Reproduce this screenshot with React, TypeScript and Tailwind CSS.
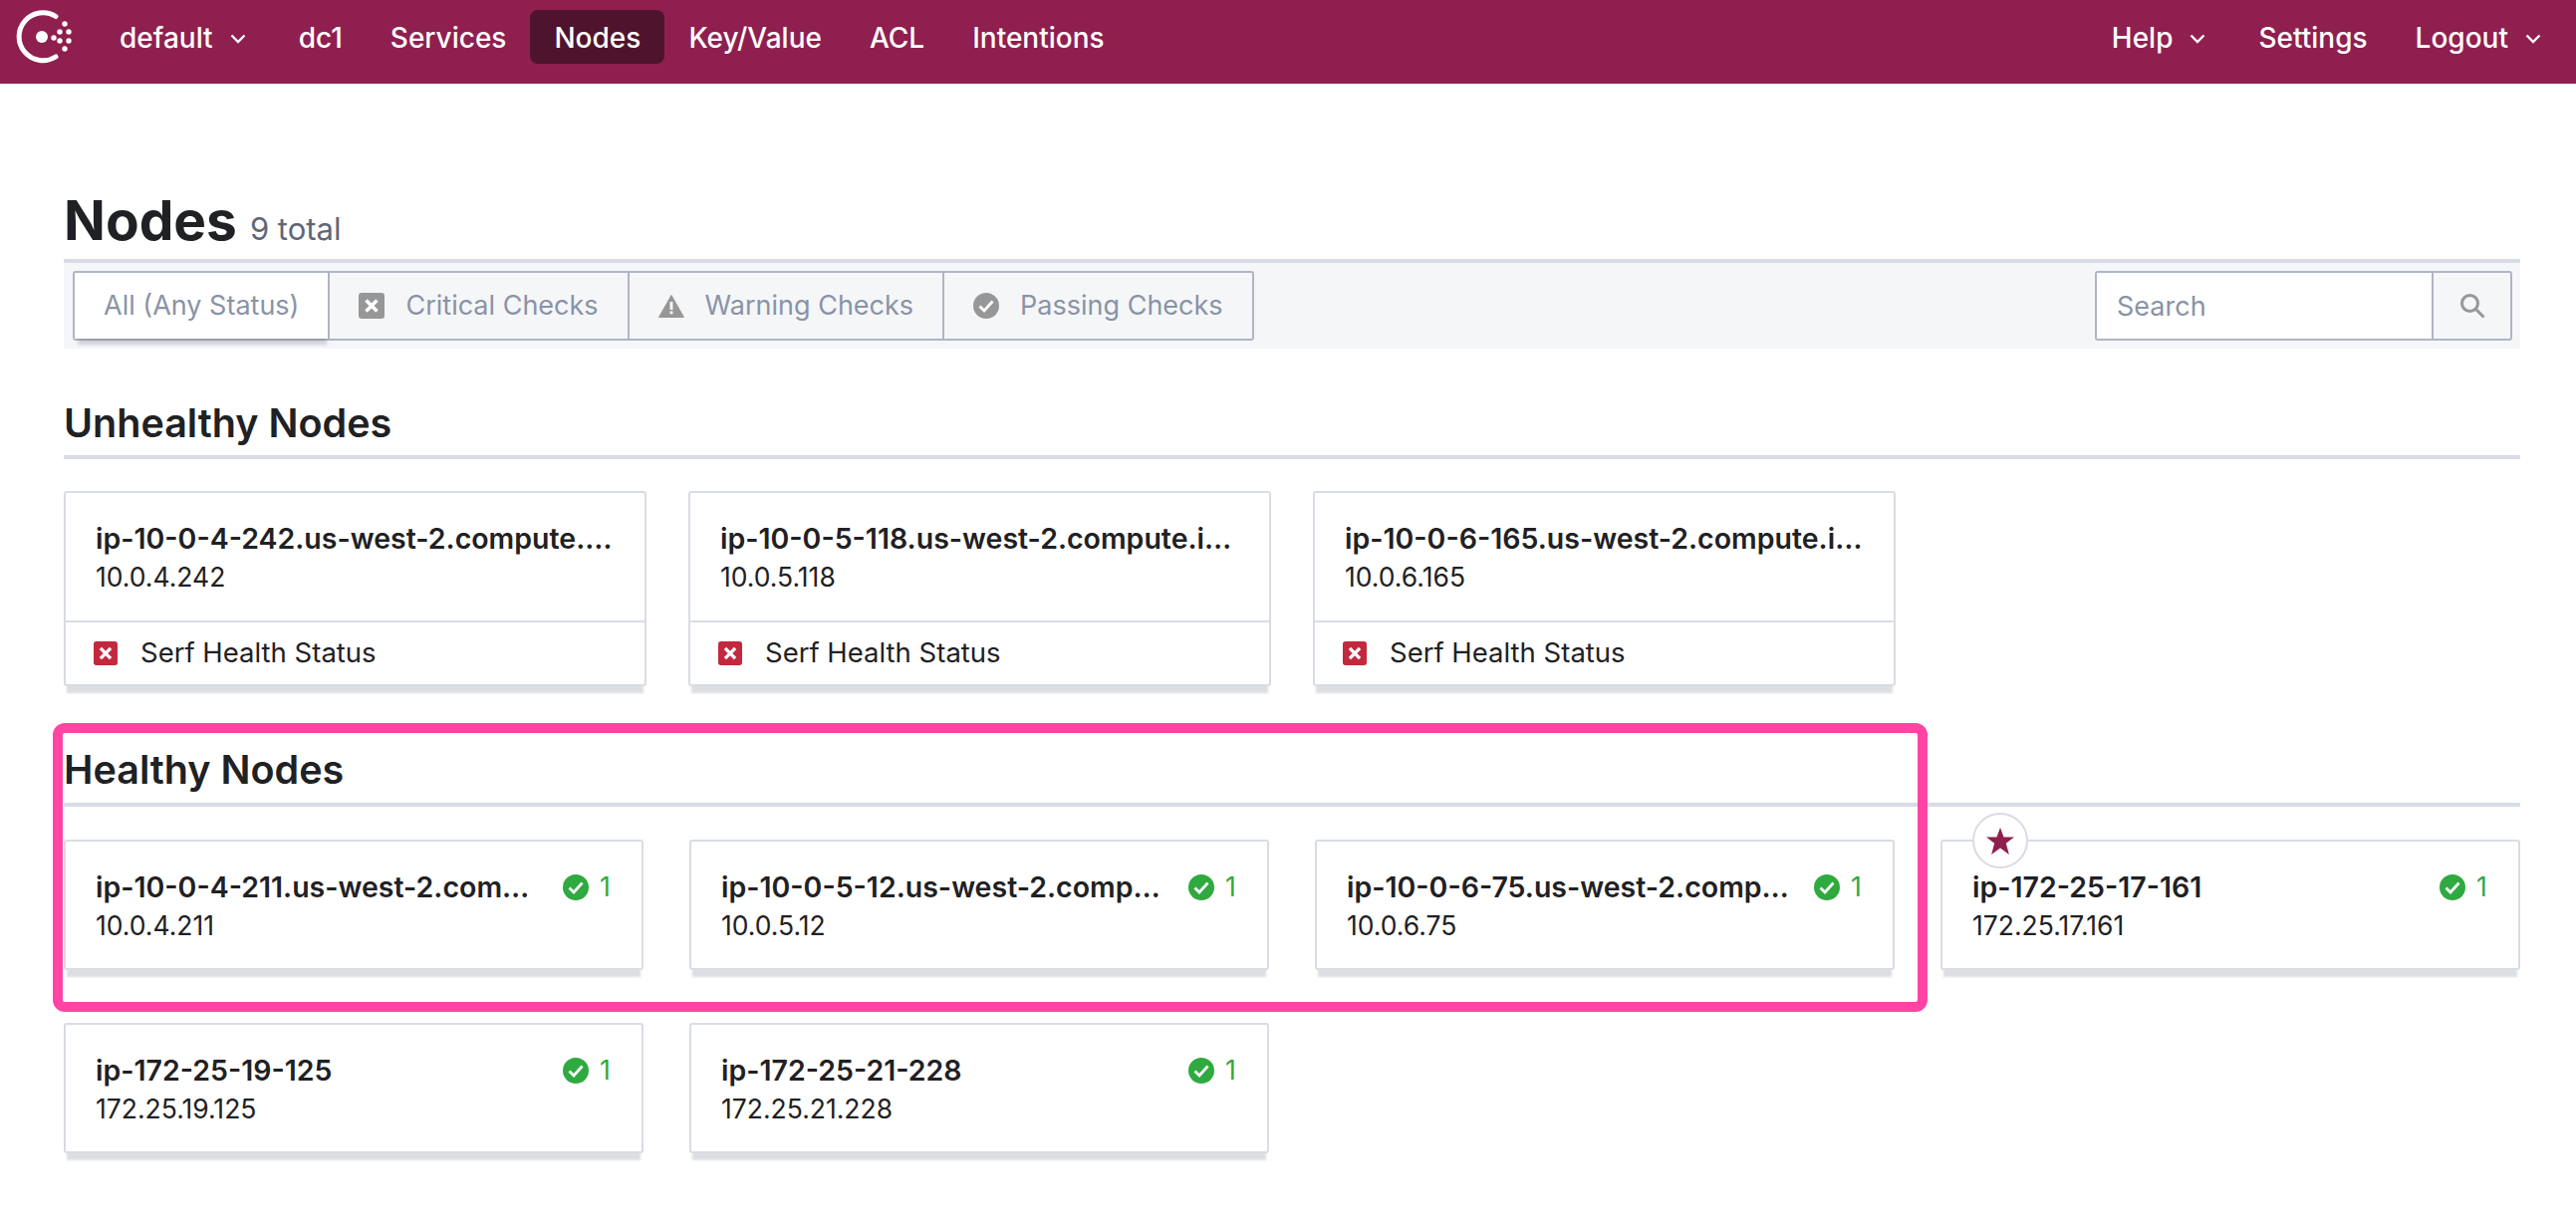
import React from "react";

const font = { fontFamily: "Inter, sans-serif" };

function Chevron() {
  return (
    <svg width="16" height="10" viewBox="0 0 16 10" fill="none" className="ml-[17px] mr-[5px] mt-[2px]">
      <path d="M1.5 1.5 8 8l6.5-6.5" stroke="#fff" strokeWidth="2.4" />
    </svg>
  );
}

function Logo() {
  return (
    <svg width="56" height="54" viewBox="0 0 56 54" fill="none" className="shrink-0">
      <path d="M40 6.500A24 24 0 1 0 40 47" stroke="#fff" strokeWidth="5" strokeLinecap="round" />
      <circle cx="26" cy="27" r="6" fill="#fff" />
      <circle cx="38" cy="28" r="2.700" fill="#fff" />
      <circle cx="49" cy="14" r="2.700" fill="#fff" />
      <circle cx="44" cy="22" r="2.700" fill="#fff" />
      <circle cx="53" cy="22" r="2.700" fill="#fff" />
      <circle cx="44" cy="31" r="2.700" fill="#fff" />
      <circle cx="53" cy="31" r="2.700" fill="#fff" />
      <circle cx="49" cy="39" r="2.700" fill="#fff" />
    </svg>
  );
}

function NavItem({ label, active, chevron }: { label: string; active?: boolean; chevron?: boolean }) {
  return (
    <div className={`flex items-center h-[54px] px-[24px] pt-[2px] rounded-[8px] text-[28px] font-medium text-white ${active ? "bg-[#4e142d]" : ""}`}>
      <span>{label}</span>
      {chevron && <Chevron />}
    </div>
  );
}

function Tab({ label, icon, active }: { label: string; icon?: React.ReactNode; active?: boolean }) {
  return (
    <div className={`flex items-center h-full text-[27px] text-[#8a93a5] border-r-2 last:border-r-0 border-[#aeb5c4] px-[29px] ${active ? "bg-white shadow-[0_9px_3px_-3px_rgba(60,70,90,0.2)]" : ""}`}>
      {icon && <span className="mr-[21px] flex items-center">{icon}</span>}
      <span>{label}</span>
    </div>
  );
}

function XSquare({ color, size }: { color: string; size: number }) {
  return (
    <svg width={size} height={size} viewBox="0 0 26 26" className="shrink-0">
      <rect width="26" height="26" rx="3" fill={color} />
      <path d="M7.500 7.500l11 11M18.500 7.500l-11 11" stroke="#fff" strokeWidth="3.600" />
    </svg>
  );
}

function Warn() {
  return (
    <svg width="26" height="24" viewBox="0 0 26 24">
      <path d="M13 1.500 25.500 23.500H.5Z" fill="#979797" stroke="#979797" strokeLinejoin="round" />
      <rect x="11.600" y="8" width="2.800" height="8" fill="#fff" />
      <rect x="11.600" y="17.500" width="2.800" height="2.800" fill="#fff" />
    </svg>
  );
}

function CheckCircle({ color, size }: { color: string; size: number }) {
  return (
    <svg width={size} height={size} viewBox="0 0 26 26" className="shrink-0">
      <circle cx="13" cy="13" r="13" fill={color} />
      <path d="M6.500 13.500l4.500 4.500L19.500 8.500" fill="none" stroke="#fff" strokeWidth="2.800" />
    </svg>
  );
}

function Heading({ children, className }: { children: React.ReactNode; className: string }) {
  return (
    <h2 className={`text-[39.5px] leading-[59px] font-semibold text-[#1f2124] border-b-4 border-[#d8dce4] ${className}`}>
      {children}
    </h2>
  );
}

function Unhealthy({ name, ip }: { name: string; ip: string }) {
  return (
    <div className="border-2 border-[#d8dce4] rounded-[3px] shadow-[0_10px_2px_-3px_rgba(60,70,90,0.18)] bg-white h-[196px] flex flex-col">
      <div className="h-[130px] border-b-2 border-[#d8dce4] px-[30px] pt-[25px]">
        <div className="text-[28.5px] leading-[42px] font-semibold text-[#1f2124] truncate">{name}</div>
        <div className="text-[26.5px] leading-[34px] text-[#1f2124]">{ip}</div>
      </div>
      <div className="flex items-center flex-1 pl-[28px] text-[27.5px] text-[#1f2124]">
        <XSquare color="#c4283f" size={24} />
        <span className="ml-[23px]">Serf Health Status</span>
      </div>
    </div>
  );
}

function Healthy({ name, ip, star }: { name: string; ip: string; star?: boolean }) {
  return (
    <div className="relative border-2 border-[#d8dce4] rounded-[3px] shadow-[0_10px_2px_-3px_rgba(60,70,90,0.18)] bg-white h-[131px] px-[30px] pt-[25px]">
      {star && (
        <div className="absolute left-[30px] top-[-29px] w-[56px] h-[56px] rounded-full border-2 border-[#d8dce4] bg-white flex items-center justify-center">
          <svg width="28" height="27" viewBox="0 0 24 23">
            <path d="M12 0l3 8h9l-7 5.500 2.600 9.500L12 17.500 4.400 23 7 13.500 0 8h9z" fill="#8e1f4e" />
          </svg>
        </div>
      )}
      <div className="flex items-center">
        <div className="flex-1 min-w-0 mr-[16px] text-[28.5px] leading-[42px] font-semibold text-[#1f2124] truncate">{name}</div>
        <CheckCircle color="#2eaa3f" size={26} />
        <span className="ml-[11px] w-[12px] text-[26.5px] text-[#2eaa3f]">1</span>
      </div>
      <div className="text-[26.5px] leading-[34px] text-[#1f2124]">{ip}</div>
    </div>
  );
}

export default function App() {
  return (
    <div style={font} className="relative min-h-[1230px] bg-white">
      <header className="h-[84px] bg-[#8f1f4f] flex items-start pt-[10px] pl-[16px] pr-[6px]">
        <Logo />
        <div className="flex items-center ml-[24px]">
          <NavItem label="default" chevron />
          <NavItem label="dc1" />
          <NavItem label="Services" />
          <NavItem label="Nodes" active />
          <NavItem label="Key/Value" />
          <NavItem label="ACL" />
          <NavItem label="Intentions" />
        </div>
        <div className="flex items-center ml-auto">
          <NavItem label="Help" chevron />
          <NavItem label="Settings" />
          <NavItem label="Logout" chevron />
        </div>
      </header>

      <main className="pl-[64px] pr-[56px]">
        <div className="flex items-baseline h-[176px] pt-[107px] leading-none">
          <h1 className="text-[55px] leading-[60px] font-bold text-[#1f2124]">Nodes</h1>
          <span className="ml-[13px] text-[31px] text-[#5f6776]">9 total</span>
        </div>

        <div className="h-[90px] border-t-4 border-[#d8dce4] bg-[#f5f6f8] flex items-center justify-between pl-[9px] pr-[8px]">
          <div className="flex items-center h-[70px] border-2 border-[#aeb5c4] rounded-[3px]">
            <Tab label="All (Any Status)" active />
            <Tab label="Critical Checks" icon={<XSquare color="#979797" size={26} />} />
            <Tab label="Warning Checks" icon={<Warn />} />
            <Tab label="Passing Checks" icon={<CheckCircle color="#979797" size={26} />} />
          </div>
          <div className="flex h-[70px] w-[419px] border-2 border-[#aeb5c4] rounded-[3px]">
            <div className="flex-1 bg-white flex items-center pl-[20px] pt-[2px] text-[27px] text-[#8a93a5] border-r-2 border-[#aeb5c4]">Search</div>
            <div className="w-[77px] flex items-center justify-center">
              <svg width="26" height="26" viewBox="0 0 26 26" fill="none">
                <circle cx="10.500" cy="10.500" r="8" stroke="#979797" strokeWidth="3" />
                <path d="M16.500 16.500l8 8" stroke="#979797" strokeWidth="3" />
              </svg>
            </div>
          </div>
        </div>

        <Heading className="mt-[46px] h-[65px]">Unhealthy Nodes</Heading>
        <div className="grid grid-cols-4 gap-[42px] mt-[32px]">
          <Unhealthy name="ip-10-0-4-242.us-west-2.compute.internal" ip="10.0.4.242" />
          <Unhealthy name="ip-10-0-5-118.us-west-2.compute.internal" ip="10.0.5.118" />
          <Unhealthy name="ip-10-0-6-165.us-west-2.compute.internal" ip="10.0.6.165" />
        </div>

        <Heading className="mt-[50px] h-[71px] pt-[5px]">Healthy Nodes</Heading>
        <div className="grid grid-cols-4 gap-x-[46px] gap-y-[53px] mt-[33px]">
          <Healthy name="ip-10-0-4-211.us-west-2.compute.internal" ip="10.0.4.211" />
          <Healthy name="ip-10-0-5-12.us-west-2.compute.internal" ip="10.0.5.12" />
          <Healthy name="ip-10-0-6-75.us-west-2.compute.internal" ip="10.0.6.75" />
          <Healthy name="ip-172-25-17-161" ip="172.25.17.161" star />
          <Healthy name="ip-172-25-19-125" ip="172.25.19.125" />
          <Healthy name="ip-172-25-21-228" ip="172.25.21.228" />
        </div>
      </main>

      <div className="absolute left-[53px] top-[726px] w-[1882px] h-[290px] border-[10px] border-[#ff44a4] rounded-[12px] pointer-events-none" />
    </div>
  );
}
